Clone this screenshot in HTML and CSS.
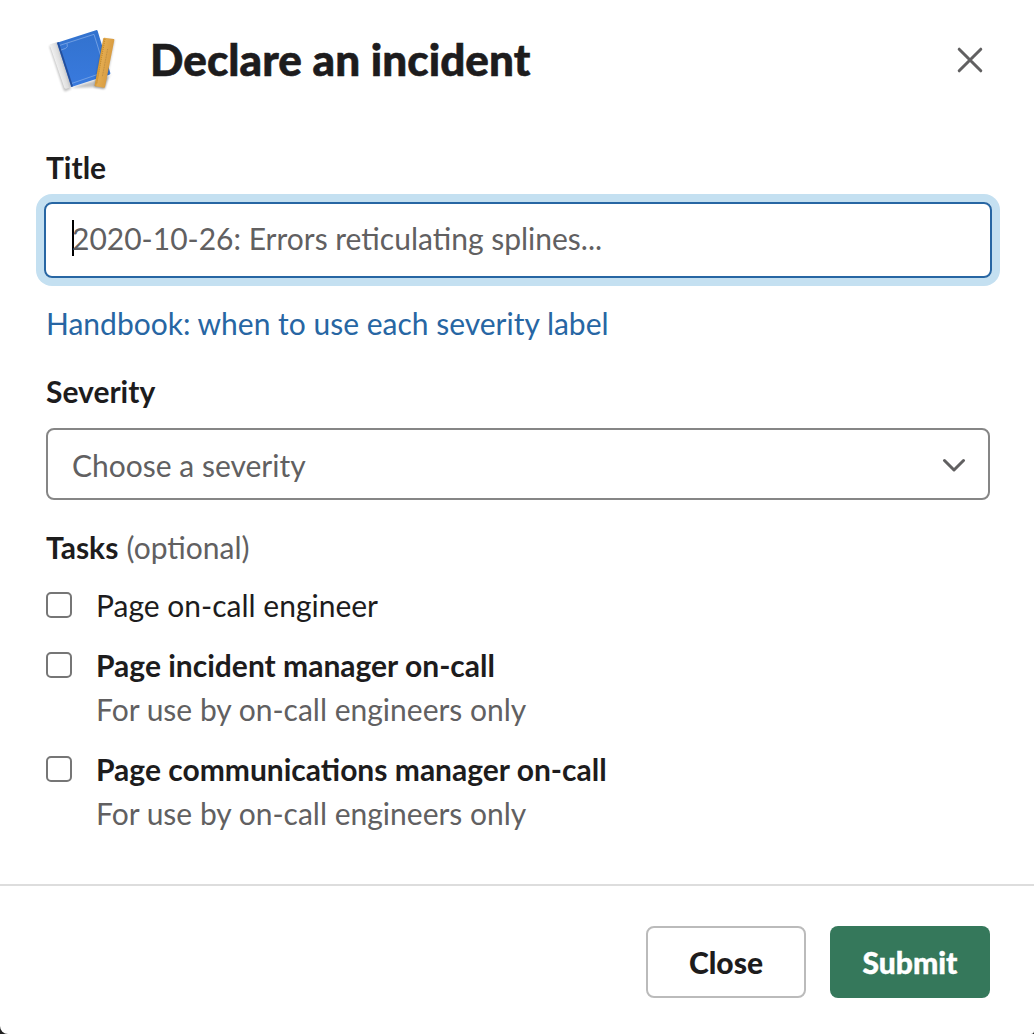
FILE: index.html
```html
<!DOCTYPE html>
<html lang="en">
<head>
<meta charset="utf-8">
<title>Declare an incident</title>
<link rel="stylesheet" href="styles.css">
</head>
<body>
<form class="modal">
  <header class="header">
    <svg class="logo" viewBox="36 36 204 192" width="68" height="64">
      <defs>
        <linearGradient id="blue" x1="0" y1="0" x2="0" y2="1"><stop offset="0" stop-color="#3272ce"/><stop offset="1" stop-color="#397ade"/></linearGradient>
        <linearGradient id="spine" gradientUnits="userSpaceOnUse" x1="58" y1="150" x2="88" y2="141"><stop offset="0" stop-color="#f4f4f4"/><stop offset=".6" stop-color="#dedede"/><stop offset="1" stop-color="#b5b5b8"/></linearGradient>
        <linearGradient id="gold" gradientUnits="userSpaceOnUse" x1="188" y1="138" x2="221" y2="144"><stop offset="0" stop-color="#d3932c"/><stop offset=".25" stop-color="#e3ab50"/><stop offset="1" stop-color="#d99d42"/></linearGradient>
      </defs>
      <path class="shade" d="M40 91 62 84 105 219 89 226Q85 227 83 222Z"/>
      <path class="shade" d="M104 216 224 178 224 172 204 219 173 214Z"/>
      <path d="M41 87Q42 84 45 84L63 79 106 213 91 218Q87 219 85 215Z" fill="url(#spine)"/>
      <path d="M63 80 182 42Q184 42 185 45L223 171Q224 174 220 176L106 213Z" fill="url(#blue)"/>
      <path d="M63 80 68 78 111 211 106 213Z" fill="#244f9c"/>
      <path class="trim" d="M72 88 174 55 209 167 108 202M75 102 89 97Q97 94 93 82"/>
      <path class="shade" d="M203 69 236 72 207 218 174 214Z"/>
      <path d="M205 65 233 69Q235 69 235 72L207 213Q206 216 203 215L177 211Q175 210 176 208L202 67Q203 65 205 65Z" fill="url(#gold)"/>
      <path class="ticks" d="M207 70 182 205"/>
      <path class="scale" d="M215 99 199 182"/>
    </svg>
    <h1 class="heading">Declare an incident</h1>
    <svg class="dismiss" viewBox="0 0 26 26" width="26" height="26"><path d="M2.2 2.2 23.8 23.8M23.8 2.2 2.2 23.8"/></svg>
  </header>
  <main class="content">
    <div class="label title-label">Title</div>
    <div class="input"><span class="caret"></span><span>2020-10-26: Errors reticulating splines...</span></div>
    <a class="link">Handbook: when to use each severity label</a>
    <div class="label">Severity</div>
    <div class="select"><span>Choose a severity</span><svg class="chevron" viewBox="0 0 24 14" width="24" height="14"><path d="M2.5 2.5 12 12 21.5 2.5"/></svg></div>
    <div class="label tasks-label">Tasks <span class="optional">(optional)</span></div>
    <div class="task"><span class="box"></span><div>Page on-call engineer</div></div>
    <div class="task"><span class="box"></span><div><b>Page incident manager on-call</b><p class="hint">For use by on-call engineers only</p></div></div>
    <div class="task"><span class="box"></span><div><b>Page communications manager on-call</b><p class="hint">For use by on-call engineers only</p></div></div>
  </main>
  <footer class="footer">
    <button type="button" class="button">Close</button>
    <button type="button" class="button primary">Submit</button>
  </footer>
</form>
</body>
</html>
```

FILE: styles.css
```css
* { box-sizing: border-box; }
body { margin: 0; background: #222; color: #1d1c1d; font: 30px/44px Lato, sans-serif; }
.modal { height: 1034px; display: flex; flex-direction: column; overflow: hidden; background: #fff; border-radius: 0 0 3px 8px; }
.header { height: 120px; display: flex; align-items: center; padding: 0 51px 0 48px; }
.logo { margin-right: 34px; overflow: visible; }
.shade { fill: #000; opacity: .24; filter: blur(3px); }
.trim { fill: none; stroke: #7ba6e6; stroke-width: 2.5; }
.ticks { fill: none; stroke: #b77c20; stroke-width: 3; stroke-dasharray: 2 4; }
.scale { fill: none; stroke: #b58740; stroke-width: 2.5; stroke-dasharray: 3 2; }
.heading { flex: 1; margin: 0; padding-bottom: 2px; font-size: 44px; line-height: 58px; font-weight: 900; letter-spacing: .08px; -webkit-text-stroke: .6px currentColor; }
.dismiss, .chevron { fill: none; stroke: #616061; stroke-width: 3; stroke-linecap: round; stroke-linejoin: round; }
.content { flex: 1; padding: 25px 44px 0 46px; }
.label { font-weight: 700; height: 44px; }
.input { display: flex; align-items: center; height: 76px; margin: 13px -2px 0; padding: 0 26px 4px; border: 2px solid #2766a3; border-radius: 8px; box-shadow: 0 0 0 8px #c4e0f1; color: #616061; }
.caret { width: 2px; height: 36px; margin-right: -2px; background: #000; }
.link { display: block; margin: 23px 0 24px; color: #2766a3; }
.select { display: flex; align-items: center; justify-content: space-between; height: 72px; margin-top: 15px; padding: 1px 22px 0 24px; border: 2px solid #868686; border-radius: 8px; color: #616061; }
.tasks-label { margin: 25px 0 14px; }
.optional { margin-left: 1px; font-weight: 400; color: #616061; }
.task { display: flex; gap: 24px; margin-bottom: 16px; }
.box { width: 26px; height: 26px; margin-top: 9px; border: 2px solid #767676; border-radius: 5px; }
.hint { margin: 0; color: #616061; }
.footer { height: 150px; flex: none; display: flex; justify-content: flex-end; gap: 24px; padding: 40px 44px 0; border-top: 2px solid #ddd; }
.button { width: 160px; height: 72px; padding: 0; border: 2px solid #bbb; border-radius: 8px; background: #fff; color: #1d1c1d; font: 900 30px Lato, sans-serif; }
.primary { border: 0; background: #35785b; color: #fff; -webkit-text-stroke: .4px currentColor; }
```
